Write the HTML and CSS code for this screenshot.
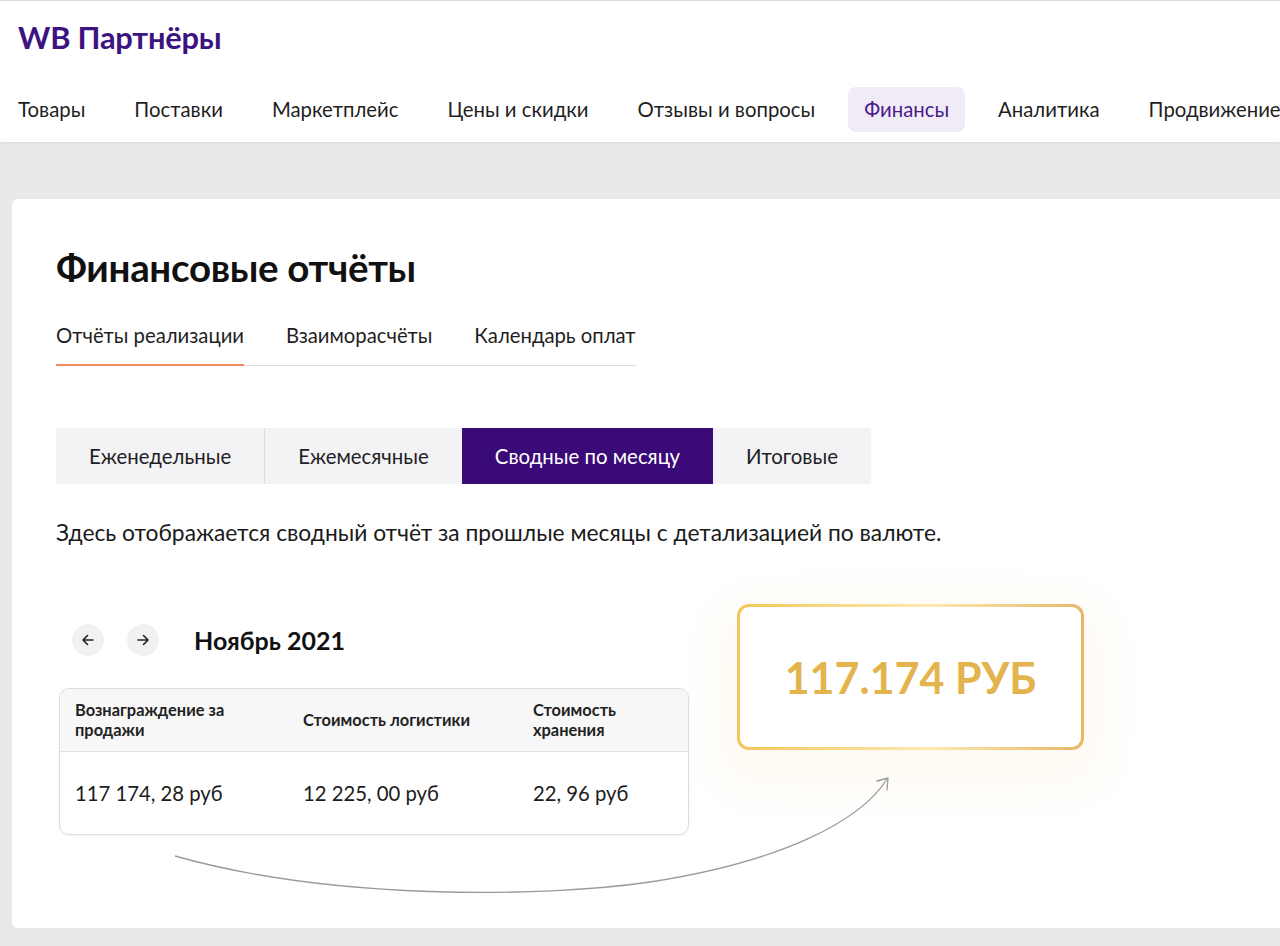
FILE: index.html
```html
<!DOCTYPE html>
<html lang="ru">
<head>
<meta charset="utf-8">
<title>WB Партнёры — Финансовые отчёты</title>
<link rel="stylesheet" href="styles.css">
</head>
<body>
<header class="header">
  <div class="logo">WB Партнёры</div>
  <nav class="nav">
    <a class="nav-item">Товары</a>
    <a class="nav-item">Поставки</a>
    <a class="nav-item">Маркетплейс</a>
    <a class="nav-item">Цены и скидки</a>
    <a class="nav-item">Отзывы и вопросы</a>
    <a class="nav-item active">Финансы</a>
    <a class="nav-item">Аналитика</a>
    <a class="nav-item">Продвижение</a>
  </nav>
</header>
<main class="main">
  <section class="card">
    <h1 class="title">Финансовые отчёты</h1>
    <div class="tabs">
      <a class="tab active">Отчёты реализации</a>
      <a class="tab">Взаиморасчёты</a>
      <a class="tab">Календарь оплат</a>
    </div>
    <div class="segments">
      <a class="seg seg-first">Еженедельные</a>
      <a class="seg">Ежемесячные</a>
      <a class="seg active">Сводные по месяцу</a>
      <a class="seg">Итоговые</a>
    </div>
    <p class="desc">Здесь отображается сводный отчёт за прошлые месяцы с детализацией по валюте.</p>
    <div class="report">
      <div class="report-left">
        <div class="month-row">
          <button class="circle-btn" aria-label="Назад">
            <svg width="14" height="14" viewBox="0 0 14 14"><path d="M12 7H2M6.5 2.5L2 7l4.5 4.5" fill="none" stroke="#222" stroke-width="1.6" stroke-linecap="round" stroke-linejoin="round"/></svg>
          </button>
          <button class="circle-btn" aria-label="Вперёд">
            <svg width="14" height="14" viewBox="0 0 14 14"><path d="M2 7h10M7.5 2.5L12 7l-4.5 4.5" fill="none" stroke="#222" stroke-width="1.6" stroke-linecap="round" stroke-linejoin="round"/></svg>
          </button>
          <span class="month">Ноябрь 2021</span>
        </div>
        <div class="table">
          <div class="trow thead">
            <div class="cell c1">Вознаграждение за продажи</div>
            <div class="cell c2">Стоимость логистики</div>
            <div class="cell c3">Стоимость хранения</div>
          </div>
          <div class="trow tbody">
            <div class="cell c1">117 174, 28 руб</div>
            <div class="cell c2">12 225, 00 руб</div>
            <div class="cell c3">22, 96 руб</div>
          </div>
        </div>
      </div>
      <div class="gold-box">117.174 РУБ</div>
    </div>
    <svg class="curve" width="1280" height="946" viewBox="0 0 1280 946">
      <path d="M175 856 C 330 900, 540 898, 650 882 C 780 862, 860 822, 887 779" fill="none" stroke="#9a9a9a" stroke-width="1.3"/>
      <path d="M877 781 L888 778 L887 790" fill="none" stroke="#9a9a9a" stroke-width="1.3" stroke-linecap="round" stroke-linejoin="round"/>
    </svg>
  </section>
</main>
</body>
</html>
```

FILE: styles.css
```css
* { box-sizing: border-box; }
html, body { margin: 0; padding: 0; }
body {
  width: 1280px;
  height: 946px;
  overflow: hidden;
  background: #e9e9e9;
  font-family: Lato, "Open Sans", "Noto Sans", sans-serif;
  color: #1c1c1c;
}
.header {
  background: #fff;
  height: 142px;
  border-top: 1px solid #d9d9d9;
  box-shadow: 0 1px 3px rgba(0,0,0,0.06);
  padding-top: 20px;
  overflow: hidden;
}
.logo {
  margin-left: 18px;
  font-size: 30.8px;
  font-weight: 700;
  color: #3c1380;
  line-height: 34px;
  letter-spacing: -0.2px;
}
.nav {
  display: flex;
  gap: 17px;
  margin-top: 32px;
  padding-left: 2px;
  white-space: nowrap;
}
.nav-item {
  display: block;
  flex-shrink: 0;
  padding: 0 16px;
  height: 45px;
  line-height: 45px;
  font-size: 20.35px;
  color: #1f1f1f;
  border-radius: 8px;
}
.nav-item.active {
  background: #f1ebf8;
  color: #4a1b8c;
}
.main {
  padding: 57px 0 18px 12px;
}
.card {
  position: relative;
  background: #fff;
  height: 729px;
  width: 1290px;
  border-radius: 6px 0 0 6px;
  padding: 46px 0 0 44px;
}
.title {
  margin: 0;
  font-size: 38.5px;
  line-height: 44px;
  font-weight: 700;
  color: #111;
  letter-spacing: -0.3px;
}
.tabs {
  display: flex;
  gap: 42px;
  margin-top: 34px;
  width: max-content;
  white-space: nowrap;
  border-bottom: 1px solid #dedede;
}
.tab {
  display: block;
  font-size: 20.3px;
  line-height: 24px;
  padding-bottom: 17px;
  color: #1f1f1f;
  border-bottom: 2px solid transparent;
  margin-bottom: -1px;
}
.tab.active {
  border-bottom-color: #f08a5d;
}
.segments {
  display: flex;
  margin-top: 62px;
  height: 56px;
  width: max-content;
  background: #f3f3f5;
}
.seg {
  display: block;
  padding: 0 33px;
  line-height: 56px;
  font-size: 20.4px;
  color: #1f1f1f;
}
.seg-first {
  border-right: 1px solid #dcdcdc;
}
.seg.active {
  background: #3a0a78;
  color: #fff;
}
.desc {
  margin: 35px 0 0;
  font-size: 22.8px;
  line-height: 26px;
  color: #1a1a1a;
}
.report {
  display: flex;
  align-items: flex-start;
  gap: 48px;
  margin-top: 59px;
}
.report-left {
  padding-top: 20px;
  width: 633px;
}
.month-row {
  display: flex;
  align-items: center;
  height: 32px;
  padding-left: 16px;
}
.circle-btn {
  width: 32px;
  height: 32px;
  border-radius: 50%;
  border: none;
  background: #f1f1f1;
  display: flex;
  align-items: center;
  justify-content: center;
  padding: 0;
  margin-right: 23px;
}
.month {
  margin-left: 12px;
  font-size: 25px;
  font-weight: 700;
  color: #111;
}
.table {
  margin: 32px 0 0 3px;
  width: 630px;
  border: 1px solid #dcdcdc;
  border-radius: 10px;
  overflow: hidden;
  box-shadow: 0 1px 3px rgba(0,0,0,0.05);
}
.trow {
  display: flex;
  align-items: center;
  padding-left: 15px;
}
.thead {
  height: 63px;
  background: #f7f7f7;
  border-bottom: 1px solid #e3e3e3;
  font-size: 16.4px;
  font-weight: 700;
  line-height: 20px;
  color: #222;
}
.tbody {
  height: 82px;
  font-size: 20.3px;
  color: #1c1c1c;
}
.c1 { width: 228px; padding-right: 40px; }
.c2 { width: 230px; }
.c3 { width: 120px; padding-right: 20px; }
.gold-box {
  width: 347px;
  height: 146px;
  border: 3px solid transparent;
  border-radius: 12px;
  background:
    linear-gradient(#fff, #fff) padding-box,
    linear-gradient(90deg, #f2c75a 0%, #f8dc8e 35%, #fbe9b4 55%, #e8b765 100%) border-box;
  box-shadow: 0 18px 50px 20px rgba(252, 230, 185, 0.18);
  display: flex;
  align-items: center;
  justify-content: center;
  font-size: 43px;
  font-weight: 700;
  letter-spacing: 0;
  color: #e3b34d;
}
.curve {
  position: absolute;
  left: -12px;
  top: -199px;
  pointer-events: none;
}
```
